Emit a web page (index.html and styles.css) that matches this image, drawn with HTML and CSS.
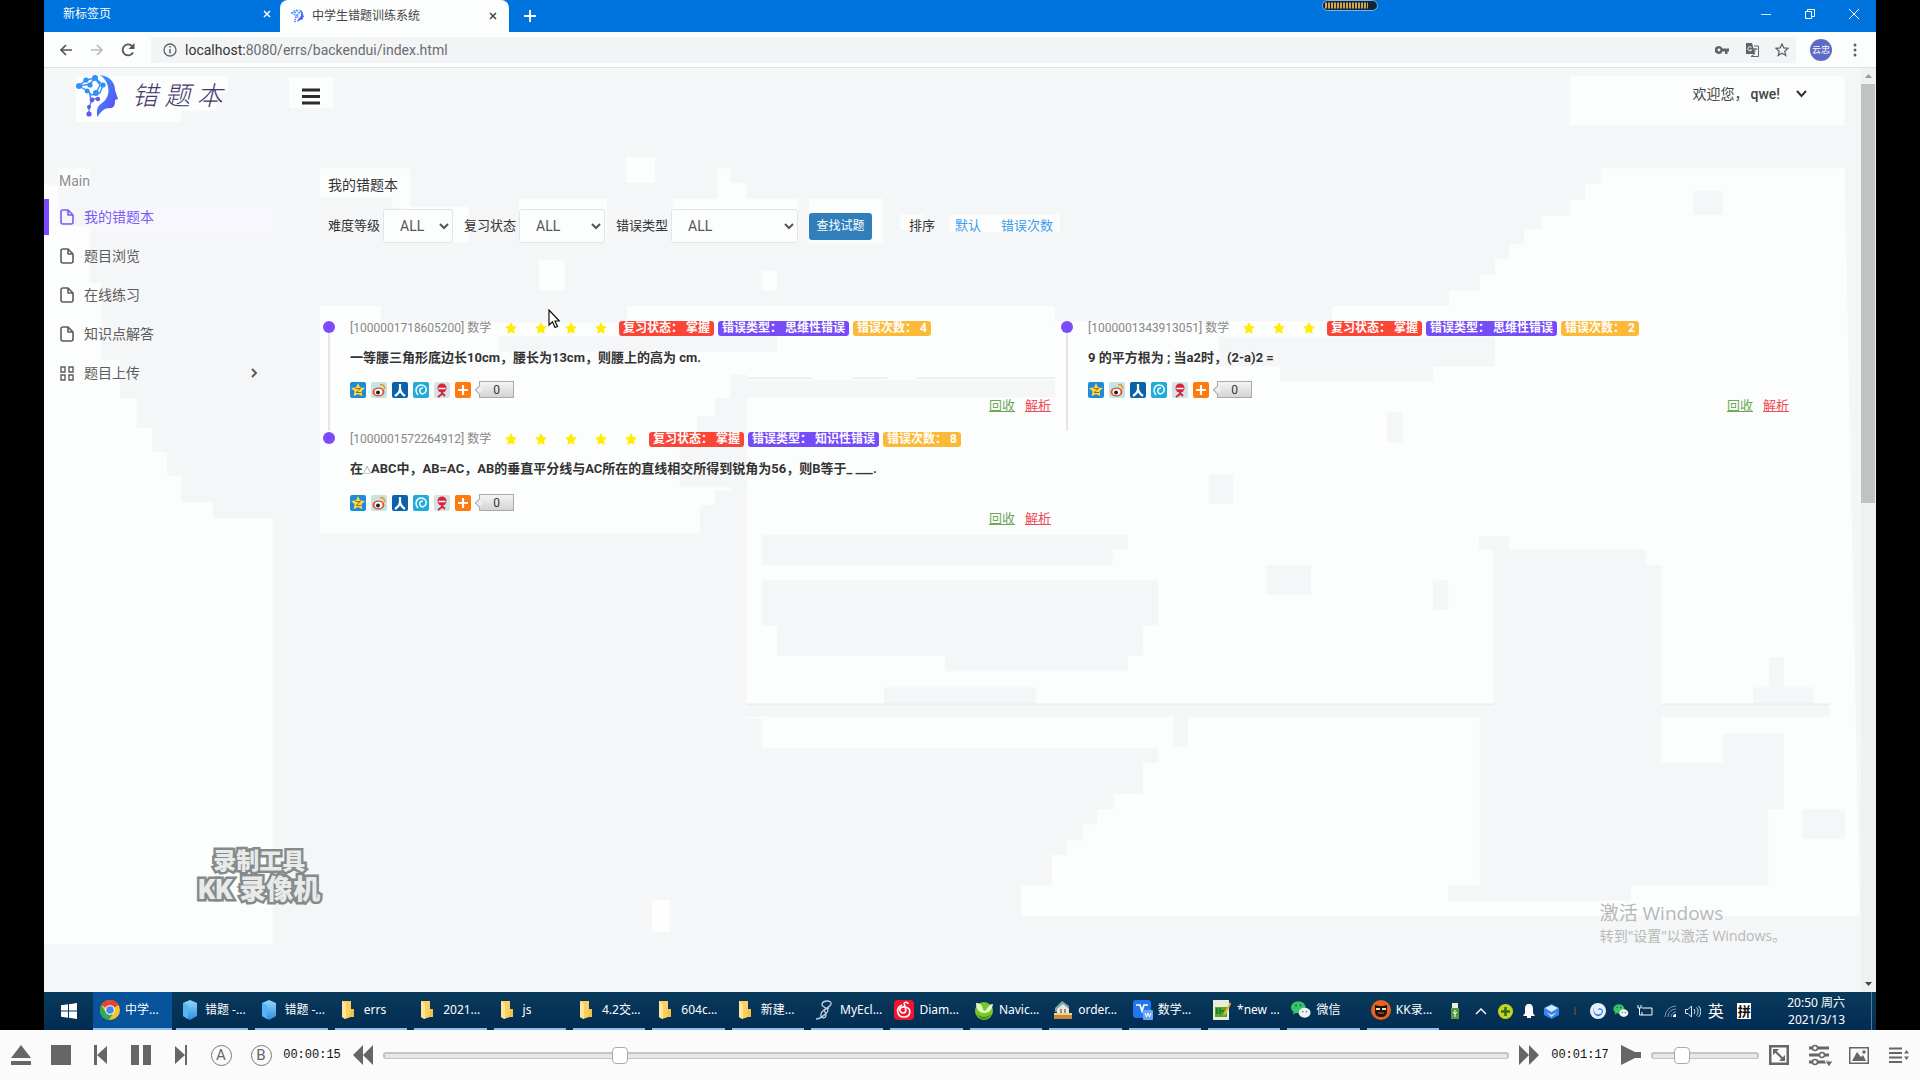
FILE: index.html
```
<!DOCTYPE html>
<html lang="zh-CN">
<head>
<meta charset="utf-8">
<title>中学生错题训练系统</title>
<link rel="stylesheet" href="styles.css">
</head>
<body>
<svg class="defs" aria-hidden="true">
  <defs>
    <linearGradient id="g-brand" x1="0" y1="0" x2="1" y2="1"><stop offset="0" stop-color="#2aa4ff"/><stop offset="1" stop-color="#6b3cf0"/></linearGradient>
    <linearGradient id="g-blue" x1="0" y1="0" x2="0" y2="1"><stop offset="0" stop-color="#8fd6ff"/><stop offset="1" stop-color="#2f8ee0"/></linearGradient>
  </defs>
  <symbol id="brain" viewBox="0 0 42 44">
    <path d="M24 1c10 1 15 8 15 15l3 9-3 1c0 6-1 8-5 8-6 0-8 3-13 9 0-6-1-10 5-14 9-6 9-20-2-28z" fill="url(#g-brand)"/>
    <path d="M3 12l7-6 9-2 8 7-3 8-8 2-6-5-7-4 11-2 5-6 5 7-4 8M13 17l2 9 7-2M16 26l-3 7v7" fill="none" stroke="#3d8ff5" stroke-width="1.4"/>
    <g fill="#2f8ff8"><circle cx="3" cy="12" r="3"/><circle cx="10" cy="6" r="2.6"/><circle cx="19" cy="4" r="3"/><circle cx="27" cy="11" r="2.6"/><circle cx="14" cy="11" r="2.6"/><circle cx="11" cy="17" r="2.4"/><circle cx="20" cy="19" r="3"/></g>
    <g fill="#6a52f4"><circle cx="16" cy="26" r="2.4"/><circle cx="22" cy="25" r="2.2"/><circle cx="13" cy="33" r="2"/><circle cx="13" cy="40" r="2.6"/></g>
  </symbol>
  <symbol id="file" viewBox="0 0 14 16"><path d="M1 3a2 2 0 0 1 2-2h5l5 5v7a2 2 0 0 1-2 2H3a2 2 0 0 1-2-2zM8 1v5h5" fill="none" stroke="currentColor" stroke-width="1.6" stroke-linejoin="round"/></symbol>
  <symbol id="cells" viewBox="0 0 14 15"><path d="M1 1h4v5H1zM9 1h4v5H9zM1 9h4v5H1zM9 9h4v5H9z" fill="none" stroke="currentColor" stroke-width="1.4"/></symbol>
  <symbol id="star" viewBox="0 0 12 12"><path d="M6 0l2 4 4 .6-3 3 .7 4.2L6 10l-3.700 1.800L3 7.600 0 4.600 4 4z" fill="#ffee00"/></symbol>
  <symbol id="s-qzone" viewBox="0 0 16 16"><rect width="16" height="16" rx="2" fill="#1f8bd6"/><path d="M8 1l2 4.400 5 .6-3.600 3.300 1 5L8 12l-4.400 2.300 1-5L1 6l5-.6z" fill="#ffd94a"/><path d="M5.500 6.500h5l-4.500 4h5" fill="none" stroke="#a36a00"/></symbol>
  <symbol id="s-weibo" viewBox="0 0 16 16"><rect width="16" height="16" rx="2" fill="#c5e4e4"/><ellipse cx="7.500" cy="10" rx="6" ry="4.500" fill="#e4502c"/><ellipse cx="7.500" cy="10" rx="4" ry="3.200" fill="#fff"/><circle cx="7" cy="10.500" r="2" fill="#222"/><path d="M9 3c3-1 5 1 4.500 4" fill="none" stroke="#f09a1c" stroke-width="1.700"/></symbol>
  <symbol id="s-renren" viewBox="0 0 16 16"><rect width="16" height="16" rx="2" fill="#0c62a8"/><path d="M8 2v5c0 3-2 5-5 7M8 6c0 4 2 6 5 8" fill="none" stroke="#fff" stroke-width="2.200"/></symbol>
  <symbol id="s-tencent" viewBox="0 0 16 16"><rect width="16" height="16" rx="2" fill="#23abd8"/><path d="M5 13C1 8 4 3 8 3s6 3 5 6-5 4-6 1 1-4 3-4" fill="none" stroke="#e6fbff" stroke-width="1.600"/></symbol>
  <symbol id="s-kaixin" viewBox="0 0 16 16"><rect width="16" height="16" rx="2" fill="#d5e3e4"/><circle cx="8" cy="6" r="4.500" fill="#d8243c"/><path d="M4.500 6.500h7" stroke="#fff" stroke-width="1.500"/><path d="M8 10v2l-4 3M8 11l3 3" fill="none" stroke="#d8243c" stroke-width="2"/></symbol>
  <symbol id="s-more" viewBox="0 0 16 16"><rect width="16" height="16" rx="2" fill="#ff7a0a"/><path d="M8 3v10M3 8h10" stroke="#fff" stroke-width="2.200"/></symbol>
  <symbol id="folder" viewBox="0 0 20 20"><path d="M3 1h9v16l-6 2-3-2z" fill="#f7cf62"/><path d="M3 1l4 3v15l-4-2z" fill="#fde59a"/><path d="M12 9h3v8h-4z" fill="#f2c14b"/></symbol>
  <symbol id="cube" viewBox="0 0 20 20"><path d="M3 3l7-3 7 3v13l-7 4-7-4z" fill="url(#g-blue)"/><path d="M3 3l5 2v14l-5-3z" fill="#55b4f3"/></symbol>
  <symbol id="wechat" viewBox="0 0 22 20"><ellipse cx="8" cy="7" rx="8" ry="6.500" fill="#37c46a"/><path d="M3 11l-1 4 4-2z" fill="#37c46a"/><ellipse cx="15" cy="13" rx="6.500" ry="5.500" fill="#eef4ef"/><circle cx="5.500" cy="5" r="1" fill="#064"/><circle cx="10.500" cy="5" r="1" fill="#064"/><circle cx="13" cy="12" r=".8" fill="#555"/><circle cx="17" cy="12" r=".8" fill="#555"/></symbol>
</svg>

<div class="stage">
  <div class="desktop">
    <header class="tabs">
      <div class="tab"><span>新标签页</span><button class="tab-x" aria-label="关闭"><svg width="8" height="8" viewBox="0 0 8 8"><path d="M1 1l6 6M7 1L1 7" stroke="currentColor" stroke-width="1.500"/></svg></button></div>
      <div class="tab tab-on"><svg class="fav" width="13" height="14"><use href="#brain"/></svg><span>中学生错题训练系统</span><button class="tab-x" aria-label="关闭"><svg width="8" height="8" viewBox="0 0 8 8"><path d="M1 1l6 6M7 1L1 7" stroke="currentColor" stroke-width="1.500"/></svg></button></div>
      <button class="newtab" aria-label="新建标签页"><svg width="12" height="12" viewBox="0 0 12 12"><path d="M6 0v12M0 6h12" stroke="#fff" stroke-width="1.800"/></svg></button>
      <svg class="meter" width="56" height="11" viewBox="0 0 56 11"><rect x=".5" y=".5" width="55" height="10" rx="5" fill="#10263c" stroke="#7fb4dc"/><path d="M3 5.500h43" stroke="#d8a54a" stroke-width="6" stroke-dasharray="2 1"/></svg>
      <div class="winbtns">
        <button aria-label="最小化"><svg width="10" height="10" viewBox="0 0 10 10"><path d="M0 5.500h10" stroke="#cfe6fb"/></svg></button>
        <button aria-label="还原"><svg width="10" height="10" viewBox="0 0 10 10"><path d="M.5 2.500h6v7h-6zM2.500 2.500v-2h7v7h-3" fill="none" stroke="#fff"/></svg></button>
        <button aria-label="关闭"><svg width="10" height="10" viewBox="0 0 10 10"><path d="M0 0l10 10M10 0L0 10" stroke="#fff"/></svg></button>
      </div>
    </header>

    <div class="toolbar">
      <button class="nav-btn" aria-label="后退"><svg width="14" height="12" viewBox="0 0 14 12"><path d="M13 6H2M7 1L2 6l5 5" fill="none" stroke="#555" stroke-width="1.700"/></svg></button>
      <button class="nav-btn" aria-label="前进"><svg width="14" height="12" viewBox="0 0 14 12"><path d="M1 6h11M7 1l5 5-5 5" fill="none" stroke="#bbb" stroke-width="1.700"/></svg></button>
      <button class="nav-btn" aria-label="刷新"><svg width="14" height="14" viewBox="0 0 14 14"><path d="M12 9.500A5.500 5.500 0 1 1 11 3" fill="none" stroke="#555" stroke-width="1.800"/><path d="M13.500 0v6h-6z" fill="#555"/></svg></button>
      <div class="omnibox">
        <svg width="14" height="14" viewBox="0 0 14 14"><circle cx="7" cy="7" r="6" fill="none" stroke="#5f6368" stroke-width="1.300"/><path d="M7 6v4.500M7 3v1.600" stroke="#5f6368" stroke-width="1.500"/></svg>
        <p class="url"><b>localhost:</b>8080/errs/backendui/index.html</p>
        <svg width="14" height="10" viewBox="0 0 14 10"><path d="M4 1a4 4 0 1 0 3.500 5.500H10V9h2.500V6.500H14v-3H7.500A4 4 0 0 0 4 1zm0 2.600a1.400 1.400 0 1 1 0 2.800 1.400 1.400 0 0 1 0-2.800z" fill="#5f6368"/></svg>
        <svg width="14" height="14" viewBox="0 0 14 14"><path d="M1 0h6l3 11H1z" fill="#5f6368"/><path d="M9 3h4.500v10.500H6L9.500 11M8 6h4.500M10 5v2c0 2-1 3-2 3" fill="none" stroke="#5f6368"/><path d="M6.500 4.500a2 2 0 1 0 0 2.500H5" fill="none" stroke="#fff"/></svg>
        <svg width="14" height="14" viewBox="0 0 14 14"><path d="M7 1l1.800 4 4.200.4-3.200 2.900 1 4.200L7 10.300l-3.800 2.200 1-4.200L1 5.400 5.200 5z" fill="none" stroke="#5f6368" stroke-width="1.300"/></svg>
      </div>
      <button class="avatar">云忠</button>
      <button class="kebab" aria-label="菜单"><svg width="4" height="14" viewBox="0 0 4 14"><g fill="#5f6368"><circle cx="2" cy="2" r="1.500"/><circle cx="2" cy="7" r="1.500"/><circle cx="2" cy="12" r="1.500"/></g></svg></button>
    </div>

    <div class="viewport">
      <div class="page">
        <svg class="backdrop" viewBox="3 13 1549 1558" preserveAspectRatio="none" aria-hidden="true">
          <g fill="#fcfdfd">
            <path d="M3 210h12v70h27v95h10v130h16v65h14v50h13v40h13v40h12v45h27v27h51v719H3z"/>
            <path d="M1538 182h-208v26h-13v27h-13v27h-24v23h-15v25h-13v25h-12v27h-13v26h-26v26H755v0H500v28H290v-28h-52v384h324v-48h13v-25h14v-25h13v410h13v50h338v25h-13v52h-25v26h-14v25h-13v27h-13v25h-13v50h-26v53h715z"/>
            <path d="M1304 26h234v84h-234zM30 26h130v30h-10v30h-30v18H30zM212 28h38v52h-38zM238 182h77v65h50v60h-55v-58h-10v-18h-62zM408 233h75v74h-75zM539 233h107v74H539zM655 233h63v76h-63zM733 260h20v26h-20zM775 260h94v30h-94zM499 163h25v44h-25zM577 182h11v25h14v28h-25zM425 336h22v52h-22zM615 355h13v33h-13zM521 1416h16v54h-16zM15 182h27v32H15z"/>
          </g>
          <g fill="#f5f6f7">
            <path d="M390 465h238v26H390zM628 400h240v14H628zM602 540h263v28H602zM588 530h14v190h-57v-90h15v-30h15v-30h13zM865 414h236v26H865zM1005 466h235v50h-53v26h-130v-26h-52z"/>
            <path d="M615 800h312v25h-13v26H615zM615 877h338v77h-13v50h-13v26H771v-26H628v-50h-13zM719 1057h130v28h390v-260h-13v-22h26v22h117v26h13v234h143v22H602v-22h117zM1227 1107h155v78h104v78h-13v128h-117v26h-156v-26h27zM1045 851h38v50h-38zM1409 220h25v40h-25zM1474 1007h12v50h26v50h-52v-50h14zM996 698h21v50h-21zM1148 594h13v50h-13zM1187 877h13v50h-13zM1434 1135h52v50h-52zM1502 1263h36v50h-36zM966 1107h12v50h-12z"/>
          </g>
          <path d="M602 1086h637M1382 1086h143M602 536h56M692 536h30M747 536h118" stroke="#eceeee" stroke-width="3"/>
          <path d="M42 250h156v40H42z" fill="#f8f7fd"/>
        </svg>

        <div class="topbar">
          <a class="brand" href="#"><svg width="42" height="44"><use href="#brain"/></svg><span>错 题 本</span></a>
          <button class="burger" aria-label="菜单"><svg width="18" height="17" viewBox="0 0 18 17"><path d="M0 2h18M0 8.500h18M0 15h18" stroke="#2b2b2b" stroke-width="3"/></svg></button>
          <button class="user">欢迎您，<b>qwe!</b><svg width="11" height="8" viewBox="0 0 11 8"><path d="M1 1l4.500 5L10 1" fill="none" stroke="#333" stroke-width="2"/></svg></button>
        </div>

        <div class="columns">
          <nav class="side">
            <p class="side-head">Main</p>
            <a class="side-link on" href="#"><svg width="14" height="16"><use href="#file"/></svg>我的错题本</a>
            <a class="side-link" href="#"><svg width="14" height="16"><use href="#file"/></svg>题目浏览</a>
            <a class="side-link" href="#"><svg width="14" height="16"><use href="#file"/></svg>在线练习</a>
            <a class="side-link" href="#"><svg width="14" height="16"><use href="#file"/></svg>知识点解答</a>
            <a class="side-link" href="#"><svg width="14" height="15"><use href="#cells"/></svg>题目上传<svg class="more" width="7" height="10" viewBox="0 0 7 10"><path d="M1 1l4 4-4 4" fill="none" stroke="currentColor" stroke-width="2"/></svg></a>
          </nav>

          <main class="main">
            <h1>我的错题本</h1>
            <form class="filters">
              <label for="level">难度等级</label><select id="level" class="w-s"><option>ALL</option></select>
              <label for="state">复习状态</label><select id="state" class="w-m"><option>ALL</option></select>
              <label for="kind">错误类型</label><select id="kind" class="w-l"><option>ALL</option></select>
              <button type="button" class="search">查找试题</button>
              <span class="sort">排序</span><a href="#">默认</a><a href="#">错误次数</a>
            </form>

            <div class="list">
              <article class="item">
                <div class="meta"><span class="code">[1000001718605200] 数学</span><span class="stars"><svg><use href="#star"/></svg><svg><use href="#star"/></svg><svg><use href="#star"/></svg><svg><use href="#star"/></svg></span><span class="tag red">复习状态： 掌握</span><span class="tag violet">错误类型： 思维性错误</span><span class="tag amber">错误次数： 4</span></div>
                <h2>一等腰三角形底边长10cm，腰长为13cm，则腰上的高为 cm.</h2>
                <div class="foot">
                  <div class="share"><svg><use href="#s-qzone"/></svg><svg><use href="#s-weibo"/></svg><svg><use href="#s-renren"/></svg><svg><use href="#s-tencent"/></svg><svg><use href="#s-kaixin"/></svg><svg><use href="#s-more"/></svg><span class="count">0</span></div>
                  <div class="acts"><a class="recycle" href="#">回收</a><a class="explain" href="#">解析</a></div>
                </div>
              </article>
              <article class="item">
                <div class="meta"><span class="code">[1000001343913051] 数学</span><span class="stars"><svg><use href="#star"/></svg><svg><use href="#star"/></svg><svg><use href="#star"/></svg></span><span class="tag red">复习状态： 掌握</span><span class="tag violet">错误类型： 思维性错误</span><span class="tag amber">错误次数： 2</span></div>
                <h2>9 的平方根为 ; 当a2时，(2-a)2 =</h2>
                <div class="foot">
                  <div class="share"><svg><use href="#s-qzone"/></svg><svg><use href="#s-weibo"/></svg><svg><use href="#s-renren"/></svg><svg><use href="#s-tencent"/></svg><svg><use href="#s-kaixin"/></svg><svg><use href="#s-more"/></svg><span class="count">0</span></div>
                  <div class="acts"><a class="recycle" href="#">回收</a><a class="explain" href="#">解析</a></div>
                </div>
              </article>
              <article class="item last">
                <div class="meta"><span class="code">[1000001572264912] 数学</span><span class="stars"><svg><use href="#star"/></svg><svg><use href="#star"/></svg><svg><use href="#star"/></svg><svg><use href="#star"/></svg><svg><use href="#star"/></svg></span><span class="tag red">复习状态： 掌握</span><span class="tag violet">错误类型： 知识性错误</span><span class="tag amber">错误次数： 8</span></div>
                <h2>在<small>△</small>ABC中，AB=AC，AB的垂直平分线与AC所在的直线相交所得到锐角为56，则B等于_ ___.</h2>
                <div class="foot">
                  <div class="share"><svg><use href="#s-qzone"/></svg><svg><use href="#s-weibo"/></svg><svg><use href="#s-renren"/></svg><svg><use href="#s-tencent"/></svg><svg><use href="#s-kaixin"/></svg><svg><use href="#s-more"/></svg><span class="count">0</span></div>
                  <div class="acts"><a class="recycle" href="#">回收</a><a class="explain" href="#">解析</a></div>
                </div>
              </article>
            </div>
          </main>
        </div>

        <div class="recorder"><p>录制工具</p><p class="big">KK 录像机</p></div>
        <div class="activate"><p class="act-head">激活 Windows</p><p>转到"设置"以激活 Windows。</p></div>
        <svg class="pointer" width="12" height="20" viewBox="0 0 12 20"><path d="M1 1v15l3.500-3.300L7 18.500l2.500-1L7 12h4.300z" fill="#fff" stroke="#111" stroke-width="1.200"/></svg>
      </div>
      <div class="scroll">
        <svg width="15" height="16" viewBox="0 0 15 16"><path d="M4 10l3.500-4 3.500 4z" fill="#999"/></svg>
        <div class="thumb"></div>
        <svg width="15" height="16" viewBox="0 0 15 16"><path d="M4 6l3.500 4L11 6z" fill="#444"/></svg>
      </div>
    </div>

    <footer class="taskbar">
      <button class="start" aria-label="开始"><svg width="16" height="16" viewBox="0 0 16 16"><path d="M0 2.300l7-1v6.200H0zM8 1.200L16 0v7.500H8zM0 8.500h7v6.200l-7-1zM8 8.500h8V16l-8-1.200z" fill="#fff"/></svg></button>
      <button class="task cur"><svg viewBox="0 0 20 20"><circle cx="10" cy="10" r="10" fill="#f6c52c"/><path d="M10 10L1.300 5A10 10 0 0 1 18.700 5z" fill="#e4453a"/><path d="M1.300 5A10 10 0 0 0 9 20l5-8-4 2-5-3z" fill="#35a853"/><path d="M10 5h8.700L10 0z" fill="#e4453a"/><circle cx="10" cy="10" r="4.800" fill="#fff"/><circle cx="10" cy="10" r="3.800" fill="#4285f4"/></svg>中学...</button>
      <div class="tasks">
        <button class="task"><svg><use href="#cube"/></svg>错题 -...</button>
        <button class="task"><svg><use href="#cube"/></svg>错题 -...</button>
        <button class="task"><svg><use href="#folder"/></svg>errs</button>
        <button class="task"><svg><use href="#folder"/></svg>2021...</button>
        <button class="task"><svg><use href="#folder"/></svg>js</button>
        <button class="task"><svg><use href="#folder"/></svg>4.2交...</button>
        <button class="task"><svg><use href="#folder"/></svg>604c...</button>
        <button class="task"><svg><use href="#folder"/></svg>新建...</button>
        <button class="task"><svg viewBox="0 0 20 20"><path d="M1 19c4 0 12-6 12-9S6 8 7 4s10-4 9 0-9 5-10 10 5 5 5 1-5-5 3-7" fill="none" stroke="#b9cde0" stroke-width="1.300"/></svg>MyEcl...</button>
        <button class="task"><svg viewBox="0 0 20 20"><rect width="20" height="20" rx="4" fill="#f0142c"/><path d="M8 5C1 8 3 17 10 17s8-9 1-10-6 6-2 6 3-4 1.500-8S14 2 14 4" fill="none" stroke="#fff" stroke-width="1.700"/></svg>Diam...</button>
        <button class="task"><svg viewBox="0 0 20 20"><circle cx="10" cy="11" r="9" fill="#7ac52a"/><path d="M2 3c7 0 6 5 8 8 3 0 4-7 9-7-1 7-5 9-9 9S2 10 2 3z" fill="#e3f7c4"/><path d="M3 14c4 4 10 4 14 0-2 5-10 8-14 0z" fill="#3c8f12"/></svg>Navic...</button>
        <button class="task"><svg viewBox="0 0 20 20"><path d="M2 8l7-7 7 5v6H2z" fill="#7fa6b5"/><path d="M4 9l6-5 6 5v7H4z" fill="#ece6d8"/><path d="M7 9h2v5H7zM11 9h2v5h-2z" fill="#9a8e7c"/><path d="M1 13h18v6H1z" fill="#c98a3f"/><path d="M1 13h18v2H1z" fill="#f1cf92"/></svg>order...</button>
        <button class="task"><svg viewBox="0 0 20 20"><rect width="18" height="18" rx="3" fill="#1f78ee"/><path d="M3 5h4l2 6 2-6h4M7 5l2 6" fill="none" stroke="#fff" stroke-width="1.700"/><rect x="10" y="10" width="10" height="10" rx="1" fill="#6aa5f8"/><path d="M12 13l1.500 4 1.500-4 1.500 4 1.500-4" fill="none" stroke="#fff"/></svg>数学...</button>
        <button class="task"><svg viewBox="0 0 20 20"><path d="M1 0h16v20H1z" fill="#e8ecd8"/><path d="M3 7h12v10H3z" fill="#5aa52a"/><path d="M5 8v6M8 8v6M8 11h4" stroke="#173" stroke-width="1.500"/><path d="M18 2l-6 11-1 3 3-2 5-10z" fill="#e5b634"/></svg>*new ...</button>
        <button class="task idle"><svg><use href="#wechat"/></svg>微信</button>
        <button class="task"><svg viewBox="0 0 20 20"><ellipse cx="10" cy="10" rx="10" ry="10" fill="#e8641c"/><path d="M4 5l4 1h4l4-1v6c0 4-2 6-6 6s-6-2-6-6z" fill="#1c1512"/><path d="M5 9h10" stroke="#f3d7bb" stroke-width="2" stroke-dasharray="4 2"/><path d="M7 13h6" stroke="#e8641c"/></svg>KK录...</button>
      </div>
      <div class="tray">
        <span class="t-wide"><svg width="10" height="16" viewBox="0 0 10 16"><path d="M2 0h6v5H2z" fill="#e6efe0"/><path d="M1 5h8v11H1z" fill="#5a9a3c"/><path d="M5 7v7M3 9l2 2 2-2" fill="none" stroke="#fff"/></svg></span>
        <span class="t-wide"><svg width="12" height="8" viewBox="0 0 12 8"><path d="M1 7l5-5 5 5" fill="none" stroke="#fff" stroke-width="1.400"/></svg></span>
        <span><svg width="15" height="15" viewBox="0 0 15 15"><circle cx="7.500" cy="7.500" r="7.500" fill="#c8d420"/><path d="M7.500 3v9M3 7.500h9" stroke="#2c6d1a" stroke-width="2.500"/></svg></span>
        <span><svg width="12" height="14" viewBox="0 0 12 14"><path d="M6 0c3 0 4 2 4 5v4l2 3H0l2-3V5c0-3 1-5 4-5zM4 12h4v2H4z" fill="#fff"/></svg></span>
        <span><svg width="15" height="15" viewBox="0 0 15 15"><path d="M0 4l7.500-4L15 4v7l-7.500 4L0 11z" fill="#3487ee"/><path d="M1 4l6.500-3L14 4 7.500 8zM2 8l5.500 3L13 8l-5.500 5z" fill="#d7e9ff"/></svg></span>
        <span><svg width="4" height="8" viewBox="0 0 4 8"><path d="M2 0v8" stroke="#4a4450" stroke-width="2"/></svg></span>
        <span><svg width="16" height="16" viewBox="0 0 16 16"><circle cx="8" cy="8" r="8" fill="#e6f0fc"/><path d="M5 3c-3 5 1 10 5 8s1-6-2-4c0-3 5-2 5 1s-3 6-6 5-5-6-2-10z" fill="#2c7fe0"/></svg></span>
        <span><svg width="16" height="14"><use href="#wechat"/></svg></span>
        <span class="t-wide"><svg width="16" height="12" viewBox="0 0 16 12"><path d="M5 3h10v7H5V7M1 0v3h3V0M2.500 3v7H5" fill="none" stroke="#fff"/></svg></span>
        <span><svg width="12" height="12" viewBox="0 0 12 12"><path d="M1 12A11 11 0 0 1 12 1M4 12a8 8 0 0 1 8-8M7 12a5 5 0 0 1 5-5" fill="none" stroke="#8098b0"/><path d="M9 12a3 3 0 0 1 3-3v3z" fill="#fff"/></svg></span>
        <span><svg width="16" height="13" viewBox="0 0 16 13"><path d="M.5 4.500H3L6.500 1v11L3 8.500H.5zM9 4c1 1.500 1 3.500 0 5M11.500 2.500c2 2 2 6 0 8M13.500 1c3 3 3 8 0 11" fill="none" stroke="#dfe9f3"/></svg></span>
        <span class="ime">英</span>
        <span class="pin">拼</span>
        <p class="clock">20:50 周六<br>2021/3/13</p>
      </div>
    </footer>
  </div>
</div>

<div class="player">
  <button aria-label="弹出"><svg width="20" height="20" viewBox="0 0 20 20"><path d="M10 0l10 13H0zM0 16h20v4H0z"/></svg></button>
  <button aria-label="停止"><svg width="20" height="20" viewBox="0 0 20 20"><path d="M0 0h20v20H0z"/></svg></button>
  <button aria-label="上一个"><svg width="14" height="20" viewBox="0 0 14 20"><path d="M0 0h3v20H0zM13 1v18L3 10z"/></svg></button>
  <button aria-label="暂停"><svg width="20" height="20" viewBox="0 0 20 20"><path d="M0 0h8v20H0zM12 0h8v20h-8z"/></svg></button>
  <button aria-label="下一个"><svg width="14" height="20" viewBox="0 0 14 20"><path d="M1 1v18l10-9zM11 0h2v20h-2z"/></svg></button>
  <button class="ab"><span>A</span></button>
  <button class="ab"><span>B</span></button>
  <time>00:00:15</time>
  <button aria-label="快退"><svg width="20" height="20" viewBox="0 0 20 20"><path d="M10 0v20L0 10zM20 0v20L10 10z"/></svg></button>
  <input class="seek" type="range" aria-label="进度" min="0" max="1000" value="205">
  <button aria-label="快进"><svg width="20" height="20" viewBox="0 0 20 20"><path d="M0 0v20l10-10zM10 0v20l10-10z"/></svg></button>
  <time>00:01:17</time>
  <button aria-label="静音"><svg width="20" height="20" viewBox="0 0 20 20"><path d="M0 0l14 7h6v6h-6L0 20z"/></svg></button>
  <input class="volume" type="range" aria-label="音量" min="0" max="100" value="24">
  <button aria-label="全屏"><svg width="20" height="20" viewBox="0 0 20 20"><path d="M0 0h20v20H0zM2.500 2.500v15h15v-15z" fill-rule="evenodd"/><path d="M4 4h6L4 10zM16 16h-6l6-6z"/><path d="M6 6l8 8" stroke="#666" stroke-width="2"/></svg></button>
  <button aria-label="设置"><svg width="28" height="28" viewBox="0 0 28 28"><path d="M4 7h20M4 14h20M4 21h20" stroke="#666" stroke-width="3"/><g fill="#fff" stroke="#666" stroke-width="1.500"><circle cx="10" cy="7" r="2.500"/><circle cx="17" cy="14" r="2.500"/><circle cx="10" cy="21" r="2.500"/></g><path d="M20 20h8l-4 6z" stroke="#fbfbfb"/></svg></button>
  <button aria-label="截图"><svg width="20" height="17" viewBox="0 0 20 17"><path d="M.75.75h18.500v15.500H.75z" fill="none" stroke="#666" stroke-width="1.500"/><path d="M3 14l5-9 4 5 2-2 3 6z"/><circle cx="15" cy="5" r="1.700"/></svg></button>
  <button aria-label="列表"><svg width="20" height="16" viewBox="0 0 20 16"><path d="M0 1.500h13M0 6h13M0 10.500h13M0 15h13" stroke="#666" stroke-width="2"/><path d="M15 6.500h5L17.500 3zM15 9.500h5L17.500 13z"/></svg></button>
</div>
</body>
</html>
```
FILE: styles.css
```
* { box-sizing: border-box; }
body { margin: 0; min-height: 100vh; display: flex; flex-direction: column; background: #000; color: #333; font: 13px/20px Roboto, "Liberation Sans", "Noto Sans CJK SC", sans-serif; }
p, h1, h2 { margin: 0; }
button { margin: 0; padding: 0; border: 0; background: none; font: inherit; color: inherit; display: flex; align-items: center; justify-content: center; }
a { text-decoration: none; color: inherit; }
svg { display: block; flex: none; }
.defs { position: absolute; width: 0; height: 0; }

.stage { flex: 1; display: flex; padding: 0 44px; }
.desktop { flex: 1; display: flex; flex-direction: column; min-width: 0; background: #f5f6f7; }

/* browser frame */
.tabs { position: relative; display: flex; height: 32px; background: #0074de; color: #fff; font-size: 12px; }
.tab { display: flex; align-items: center; width: 236px; padding: 0 9px 4px 19px; }
.tab-on { width: 229px; gap: 8px; padding: 0 12px 0 11px; background: #fcfdfd; color: #444; border-radius: 8px 8px 0 0; }
.tab-x { margin-left: auto; }
.newtab { width: 42px; }
.meter { position: absolute; left: 1278px; top: 0; }
.winbtns { display: flex; margin-left: auto; }
.winbtns button { width: 44px; height: 28px; }
.toolbar { display: flex; align-items: center; height: 36px; padding: 0 6px; background: #fcfdfd; border-bottom: 1px solid #dfe2e2; }
.nav-btn { width: 31px; }
.omnibox { flex: 1; display: flex; align-items: center; gap: 16px; height: 26px; margin-left: 8px; padding: 0 7px 0 12px; background: #f3f4f5; }
.url { flex: 1; margin-left: -8px; font-size: 14px; color: #6a6d70; }
.url b { font-weight: 400; color: #333; }
.avatar { width: 22px; height: 22px; margin: 0 18px 0 14px; border-radius: 50%; background: #5c6bc8; color: #fff; font-size: 9px; }
.kebab { width: 10px; margin-right: 10px; }

/* web page */
.viewport { flex: 1; display: flex; }
.page { position: relative; flex: 1; }
.backdrop { position: absolute; inset: 0; width: 100%; height: 100%; }
.topbar { position: relative; display: flex; align-items: center; height: 56px; padding: 0 54px 0 32px; }
.brand { display: flex; align-items: center; gap: 14px; width: 226px; color: #43376b; font-size: 26px; font-style: italic; font-weight: 300; line-height: 32px; }
.user { margin-left: auto; gap: 2px; padding-bottom: 4px; font-size: 14px; color: #444; }
.user b { font-weight: 500; }
.user svg { margin-left: 14px; }
.columns { position: relative; display: flex; }
.side { width: 228px; padding-top: 47px; }
.side-head { margin-bottom: 8px; padding-left: 15px; font-size: 14px; color: #8d8d8d; }
.side-link { display: flex; align-items: center; gap: 10px; height: 36px; margin-bottom: 3px; padding: 0 14px 0 16px; font-size: 14px; color: #5c5c5c; }
.side-link.on { padding-left: 11px; border-left: 5px solid #7a4bff; color: #7a5cf5; }
.more { margin-left: auto; }
.main { flex: 1; padding: 51px 65px 0 48px; }
h1 { padding-left: 8px; font-size: 14px; font-weight: 400; }
.filters { display: flex; align-items: center; margin: 14px 0 75px; padding-left: 8px; }
.filters a { margin-left: 20px; color: #3d9bee; }
select { height: 34px; margin: 0 11px 0 3px; padding: 0 4px 0 12px; border: 1px solid #e3e5e6; border-radius: 3px; background: #fcfdfd; color: #555; font: 14px/20px Roboto, sans-serif; }
.w-s { width: 70px; }
.w-m { width: 86px; }
.w-l { width: 127px; }
.search { width: 63px; height: 27px; border-radius: 3px; background: #317fba; color: #fff; font-size: 12px; }
.sort { margin-left: 37px; }
.list { display: grid; grid-template-columns: 1fr 1fr; }
.item { position: relative; height: 111px; padding: 0 7px 0 30px; }
.item::before { content: ""; position: absolute; left: 8px; top: 9px; width: 2px; height: 104px; background: #e6e4f0; }
.item.last::before { height: 0; }
.item::after { content: ""; position: absolute; left: 3px; top: 3px; width: 12px; height: 12px; border-radius: 50%; background: #7a4bff; }
.meta { display: flex; align-items: center; gap: 4px; height: 20px; font-size: 12px; color: #888; }
.code { min-width: 142px; white-space: nowrap; }
.stars { display: flex; margin-right: -1px; }
.stars svg { width: 30px; height: 12px; }
.tag { padding: 0 4px; border-radius: 3px; color: #fff; font-weight: 700; line-height: 15px; white-space: nowrap; }
.red { background: #fb4637; }
.violet { background: #754cf8; }
.amber { background: #fcb937; }
h2 { margin: 10px 0 13px; font-size: 13px; font-weight: 700; line-height: 20px; white-space: nowrap; }
h2 small { font-size: 8px; font-weight: 400; }
.foot { display: flex; justify-content: space-between; height: 35px; }
.share { display: flex; gap: 5px; }
.share svg { width: 16px; height: 16px; margin-top: 1px; }
.count { position: relative; width: 35px; height: 17px; margin-left: 3px; border: 1px solid #aaa; background: linear-gradient(#f4f4f4, #d4d4d4); font-size: 12px; line-height: 16px; text-align: center; }
.count::before { content: ""; position: absolute; left: -4px; top: 5px; width: 5px; height: 5px; border-left: 1px solid #aaa; border-bottom: 1px solid #aaa; background: #eee; transform: rotate(45deg); }
.acts { display: flex; gap: 10px; align-items: flex-end; }
.acts a { text-decoration: underline; }
.recycle { color: #6fa858; }
.explain { color: #f04a55; }
.recorder { position: absolute; left: 154px; bottom: 88px; text-align: center; color: #e8eaea; font-size: 23px; font-weight: 900; line-height: 28px; -webkit-text-stroke: 5px #858b8b; paint-order: stroke fill; }
.recorder .big { font-size: 27px; }
.activate { position: absolute; right: 75px; bottom: 45px; font: 14px/22px "Open Sans", "Noto Sans CJK SC", sans-serif; color: #b6b9b9; }
.act-head { font-size: 19px; line-height: 24px; }
.pointer { position: absolute; left: 504px; top: 241px; }
.scroll { display: flex; flex-direction: column; width: 15px; background: #f0f1f1; }
.thumb { height: 419px; margin: 0 1px 0 0; background: #c1c2c2; }
.scroll svg:last-child { margin-top: auto; }

/* task bar */
.taskbar { display: flex; height: 38px; background: linear-gradient(#093a5c, #022c52); color: #fff; font: 12px/16px "Noto Sans", "Noto Sans CJK SC", sans-serif; }
.start { width: 49px; }
.tasks { flex: 1; display: grid; grid-template-columns: repeat(16, 1fr); }
.task { justify-content: flex-start; gap: 5px; height: 38px; margin: 0 3px 0 4px; padding-left: 4px; border-bottom: 2px solid #8cc0f0; white-space: nowrap; overflow: hidden; }
.task svg { width: 20px; height: 20px; }
.cur { width: 79px; margin: 0; padding-left: 7px; background: #07549a; }
.tray { display: flex; align-items: center; padding-right: 26px; margin-right: 4px; border-right: 1px solid #5b7893; }
.tray span { display: flex; justify-content: center; width: 23px; }
.tray .t-wide { width: 26px; }
.tray .ime { font-size: 16px; line-height: 20px; }
.tray .pin { width: 14px; margin: 0 36px 0 10px; background: #fff; color: #111; font-size: 13px; font-weight: 700; }
.clock { line-height: 17px; text-align: right; }

/* media player */
.player { display: flex; align-items: center; height: 50px; padding: 0 1px; background: #fbfbfb; }
.player button { width: 40px; height: 40px; flex: none; }
.player svg { fill: #666; }
.ab span { width: 21px; height: 21px; border: 1px solid #777; border-radius: 50%; color: #666; font-size: 15px; line-height: 19px; }
time { width: 62px; text-align: center; font: 12px/20px "Liberation Mono", monospace; color: #111; }
input[type=range] { appearance: none; height: 16px; margin: 0; background: none; }
input::-webkit-slider-runnable-track { height: 7px; border: 2px solid #c2c5c5; border-bottom-width: 1px; border-radius: 3px; background: #e6e8e6; }
input::-webkit-slider-thumb { appearance: none; width: 16px; height: 17px; margin-top: -7px; border: 1px solid #aaa; border-radius: 4px; background: #fff; }
.seek { flex: 1; min-width: 0; }
.volume { width: 108px; }
```
